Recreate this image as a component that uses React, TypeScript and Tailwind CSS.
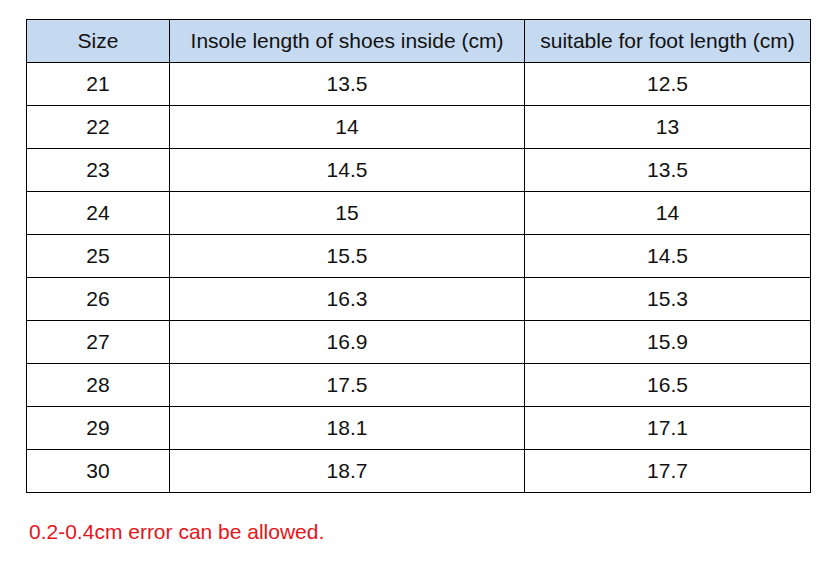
const ROWS: [string, string, string][] = [
  ['21', '13.5', '12.5'],
  ['22', '14', '13'],
  ['23', '14.5', '13.5'],
  ['24', '15', '14'],
  ['25', '15.5', '14.5'],
  ['26', '16.3', '15.3'],
  ['27', '16.9', '15.9'],
  ['28', '17.5', '16.5'],
  ['29', '18.1', '17.1'],
  ['30', '18.7', '17.7'],
]

export default function App() {
  return (
    <div className="w-[831px] h-[577px] bg-white pt-[19px] pl-[26px] font-['Liberation_Sans',Arial,sans-serif] text-[#111]">
      <table className="table-fixed border-collapse w-[784px] text-[21px]">
        <colgroup>
          <col className="w-[143px]" />
          <col className="w-[355px]" />
          <col className="w-[286px]" />
        </colgroup>
        <thead>
          <tr className="h-[43px] bg-[#c5d9f0]">
            <th className="border border-black font-normal p-0">Size</th>
            <th className="border border-black font-normal p-0">Insole length of shoes inside (cm)</th>
            <th className="border border-black font-normal p-0">suitable for foot length (cm)</th>
          </tr>
        </thead>
        <tbody>
          {ROWS.map((r) => (
            <tr key={r[0]} className="h-[43px]">
              {r.map((c, i) => (
                <td key={i} className="border border-black text-center p-0">
                  {c}
                </td>
              ))}
            </tr>
          ))}
        </tbody>
      </table>
      <p className="mt-[23px] ml-[3px] text-[21px] text-[#e5141b]">0.2-0.4cm error can be allowed.</p>
    </div>
  )
}
